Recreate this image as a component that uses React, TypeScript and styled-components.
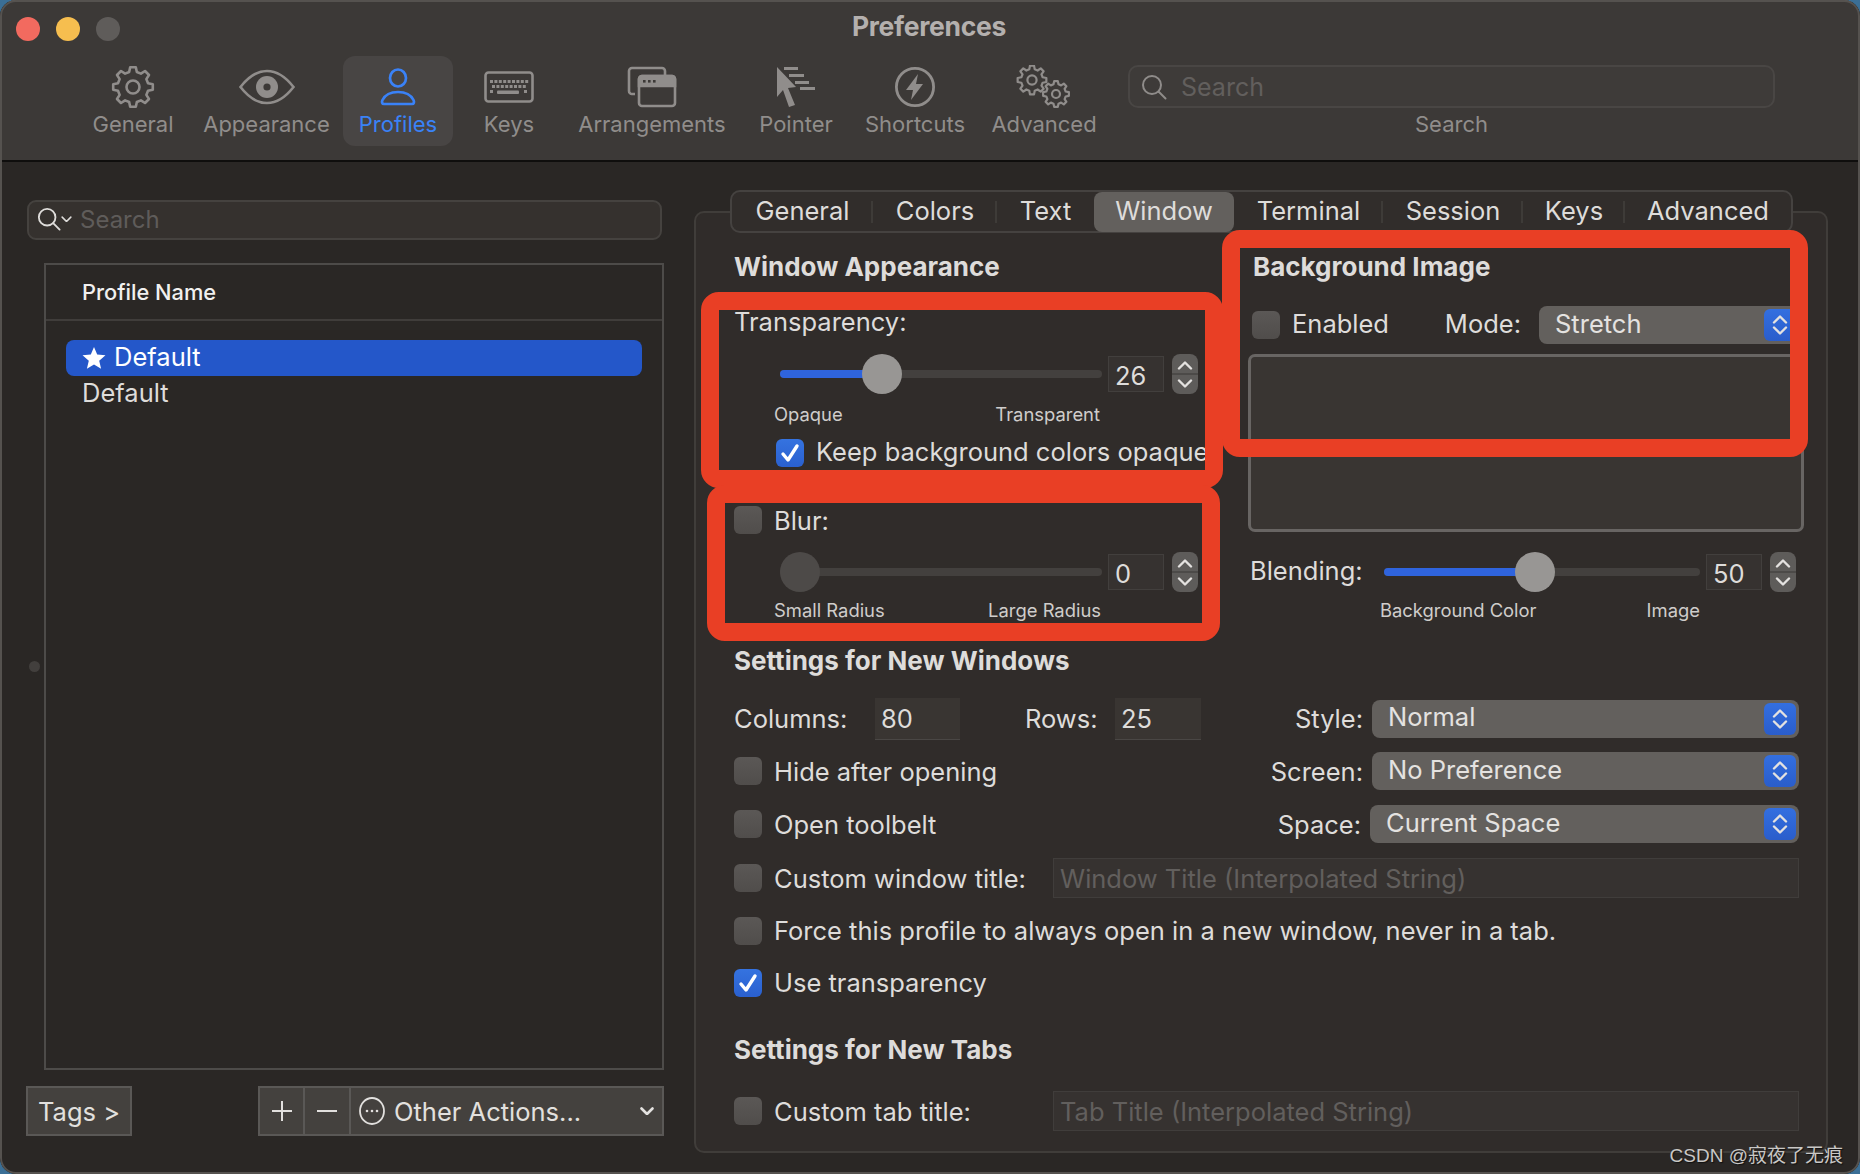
import React from 'react';
import styled, { createGlobalStyle } from 'styled-components';

const GlobalStyle = createGlobalStyle`
    html, body {
        margin: 0;
        padding: 0;
        background: #3b6f96;
    }
    * {
        box-sizing: border-box;
    }
    body {
        font-family: Inter, "Liberation Sans", sans-serif;
    }
`;

const Window = styled.div`
    position: relative;
    width: 1860px;
    height: 1174px;
    border-radius: 16px;
    overflow: hidden;
    display: flex;
    flex-direction: column;
    background: #2a2725;
    &::after {
        content: '';
        position: absolute;
        inset: 0;
        border-radius: 16px;
        border: 2px solid #55524f;
        pointer-events: none;
        z-index: 5;
    }
`;

const Header = styled.div`
    height: 162px;
    flex: none;
    background: #3c3937;
    border-top: 2px solid #6b6967;
    border-bottom: 2px solid #0f0e0d;
`;

const TitleBar = styled.div`
    height: 54px;
    padding-left: 16px;
    display: grid;
    grid-template-columns: 1fr auto 1fr;
    align-items: center;
`;

const Lights = styled.div`
    display: flex;
    gap: 16px;
`;

const Light = styled.div<{ $color: string }>`
    width: 24px;
    height: 24px;
    border-radius: 50%;
    background: ${(p) => p.$color};
`;

const Title = styled.div`
    font-size: 26.5px;
    font-weight: 700;
    letter-spacing: -0.3px;
    color: #b4b0ae;
    margin: 0 18px 6px 0;
`;

const ToolRow = styled.div`
    display: flex;
    padding-left: 76px;
    height: 90px;
`;

const ToolItem = styled.div<{ $w: number; $active?: boolean }>`
    width: ${(p) => p.$w}px;
    flex: none;
    height: 90px;
    padding-top: 9px;
    border-radius: 12px;
    display: flex;
    flex-direction: column;
    align-items: center;
    background: ${(p) => (p.$active ? '#484544' : 'transparent')};
    color: ${(p) => (p.$active ? '#3a82f7' : '#908d8b')};
`;

const ToolIcon = styled.div`
    height: 44px;
    display: flex;
    align-items: center;
    justify-content: center;
`;

const ToolLabel = styled.div`
    margin-top: 1px;
    font-size: 22px;
    line-height: 28px;
    white-space: nowrap;
`;

const ToolSearch = styled.div`
    width: 647px;
    margin-left: 17px;
    padding-top: 9px;
    display: flex;
    flex-direction: column;
    align-items: center;
    color: #908d8b;
`;

const ToolSearchBox = styled.div`
    width: 100%;
    height: 43px;
    border: 2px solid #494644;
    border-radius: 10px;
    background: #3e3b39;
    display: flex;
    align-items: center;
    padding-left: 11px;
    gap: 14px;
    font-size: 25px;
    color: #625f5d;
    margin-bottom: 1px;
`;

const Main = styled.div`
    flex: 1;
    display: flex;
`;

const LeftPane = styled.div`
    position: relative;
    width: 664px;
    flex: none;
    padding: 38px 0 0 26px;
    display: flex;
    flex-direction: column;
`;

const ProfileSearch = styled.div`
    margin-left: 1px;
    width: 635px;
    height: 40px;
    border: 2px solid #45423f;
    border-radius: 9px;
    background: #35312e;
    display: flex;
    align-items: center;
    padding: 0 0 2px 8px;
    gap: 8px;
    font-size: 24px;
    color: #5f5c5a;
`;

const SearchCaret = styled.span`
    margin-left: -8px;
    display: flex;
`;

const ProfileTable = styled.div`
    margin: 23px 0 0 18px;
    width: 620px;
    height: 807px;
    border: 2px solid #4d4b49;
`;

const TableHead = styled.div`
    height: 56px;
    padding-left: 36px;
    display: flex;
    align-items: center;
    border-bottom: 2px solid #403d3b;
    font-size: 21.8px;
    font-weight: 500;
    color: #f1f0ef;
`;

const TableBody = styled.div`
    padding: 19px 20px 0 20px;
`;

const ProfileRow = styled.div<{ $selected?: boolean }>`
    height: 36px;
    padding-left: 16px;
    display: flex;
    align-items: center;
    gap: 8px;
    border-radius: 8px;
    font-size: 25.5px;
    background: ${(p) => (p.$selected ? '#2457c9' : 'transparent')};
    color: ${(p) => (p.$selected ? '#ffffff' : '#dedcda')};
`;

const Lifted = styled.span`
    margin-bottom: 4px;
`;

const SplitDot = styled.div`
    position: absolute;
    left: 29px;
    top: 499px;
    width: 11px;
    height: 11px;
    border-radius: 50%;
    background: #423f3d;
`;

const Footer = styled.div`
    margin-top: 16px;
    display: flex;
    justify-content: space-between;
`;

const FooterBtn = styled.div<{ $w: number }>`
    width: ${(p) => p.$w}px;
    height: 50px;
    border: 2px solid #5a5856;
    background: #44413e;
    color: #e2e0de;
    font-size: 25.5px;
    display: flex;
    align-items: center;
    justify-content: center;
`;

const FooterGroup = styled.div`
    display: flex;
`;

const JoinBtn = styled(FooterBtn)`
    margin-left: -2px;
`;

const ActionsBtn = styled(FooterBtn)`
    margin-left: -2px;
    justify-content: flex-start;
    padding: 0 8px;
    gap: 9px;
`;

const ActionsChevron = styled.div`
    margin-left: auto;
    display: flex;
`;

const RightWrap = styled.div`
    position: relative;
    margin-left: 30px;
    width: 1134px;
    padding-top: 28px;
    display: flex;
    flex-direction: column;
`;

const TabBar = styled.div`
    position: relative;
    z-index: 1;
    margin-left: 36px;
    width: 1063px;
    height: 43px;
    border: 2px solid #454240;
    border-radius: 10px;
    background: #312d2b;
    display: flex;
    align-items: center;
`;

const Tab = styled.div<{ $w: number; $on?: boolean; $sep?: boolean }>`
    position: relative;
    width: ${(p) => p.$w}px;
    height: 40px;
    padding-bottom: 2px;
    border-radius: 8px;
    display: flex;
    align-items: center;
    justify-content: center;
    font-size: 25.5px;
    color: #dedcda;
    background: ${(p) => (p.$on ? '#63605d' : 'transparent')};
    &::after {
        content: '';
        display: ${(p) => (p.$sep ? 'block' : 'none')};
        position: absolute;
        right: 0;
        top: 9px;
        height: 22px;
        width: 2px;
        background: #3e3b38;
    }
`;

const Pane = styled.div`
    position: relative;
    margin-top: -22px;
    height: 942px;
    border: 2px solid #403d3a;
    border-radius: 10px;
    background: #302c2a;
    padding: 20px 0 0 38px;
    color: #dedcda;
    font-size: 25.5px;
`;

const TopGrid = styled.div`
    display: grid;
    grid-template-columns: 516px 549px;
`;

const Column = styled.div`
    display: flex;
    flex-direction: column;
`;

const Row = styled.div<{ $h: number; $indent?: number; $top?: number }>`
    height: ${(p) => p.$h}px;
    margin-top: ${(p) => p.$top || 0}px;
    padding-left: ${(p) => p.$indent || 0}px;
    display: flex;
    align-items: center;
    white-space: nowrap;
`;

const Heading = styled.div<{ $ml?: number }>`
    margin-left: ${(p) => p.$ml || 0}px;
    font-size: 26px;
    font-weight: 700;
    color: #dedcda;
`;

const Check = styled.div<{ $on?: boolean }>`
    width: 28px;
    height: 28px;
    flex: none;
    margin-right: 12px;
    border-radius: 6px;
    display: flex;
    align-items: center;
    justify-content: center;
    background: ${(p) => (p.$on ? 'linear-gradient(#3573e0, #2a60cf)' : 'linear-gradient(#5b5856, #504d4b)')};
`;

const SliderTrack = styled.div<{ $w: number }>`
    position: relative;
    width: ${(p) => p.$w}px;
    height: 8px;
    border-radius: 4px;
    background: #43403e;
    flex: none;
`;

const SliderFill = styled.div<{ $w: number }>`
    width: ${(p) => p.$w}px;
    height: 8px;
    border-radius: 4px;
    background: #2f64dd;
`;

const SliderThumb = styled.div<{ $x: number; $dim?: boolean }>`
    position: absolute;
    left: ${(p) => p.$x - 20}px;
    top: -16px;
    width: 40px;
    height: 40px;
    border-radius: 50%;
    background: ${(p) => (p.$dim ? '#4d4a48' : '#989694')};
`;

const NumberBox = styled.div`
    width: 56px;
    height: 36px;
    margin-left: 6px;
    padding: 2px 0 0 6px;
    flex: none;
    display: flex;
    align-items: center;
    background: #363230;
    border: 1px solid #423f3d;
`;

const StepperBox = styled.div`
    position: relative;
    width: 26px;
    height: 40px;
    margin-left: 8px;
    flex: none;
    border-radius: 8px;
    background: #5e5c5a;
    display: flex;
    align-items: center;
    justify-content: center;
    &::before {
        content: '';
        position: absolute;
        left: 0;
        right: 0;
        top: 19px;
        height: 2px;
        background: #4c4a48;
    }
`;

const SmallLabels = styled.div<{ $left: number; $w: number }>`
    margin-left: ${(p) => p.$left}px;
    width: ${(p) => p.$w}px;
    display: flex;
    justify-content: space-between;
    font-size: 18.4px;
    color: #cfcdcb;
`;

const ModeLabel = styled(Lifted)`
    margin-left: auto;
    margin-right: 18px;
`;

const Popup = styled.div<{ $w: number }>`
    width: ${(p) => p.$w}px;
    height: 38px;
    flex: none;
    border-radius: 8px;
    background: #63605d;
    display: flex;
    align-items: center;
    justify-content: space-between;
    padding: 0 3px 0 16px;
    color: #e4e2e0;
`;

const PopupArrows = styled.div`
    width: 32px;
    height: 32px;
    border-radius: 6px;
    background: linear-gradient(#336fe0, #2a5dcb);
    display: flex;
    align-items: center;
    justify-content: center;
`;

const ImageWell = styled.div`
    margin: 4px 0 0 -2px;
    width: 556px;
    height: 178px;
    border: 3px solid #686563;
    border-radius: 7px;
    background: #393532;
`;

const BlendLabel = styled(Lifted)`
    width: 134px;
    flex: none;
`;

const RowLeft = styled.div`
    display: flex;
    align-items: center;
`;

const RowRight = styled.div`
    margin-left: auto;
    margin-right: 27px;
    display: flex;
    align-items: center;
    gap: 9px;
`;

const FieldName = styled.span<{ $w: number; $ml?: number }>`
    width: ${(p) => p.$w}px;
    margin-left: ${(p) => p.$ml || 0}px;
    flex: none;
`;

const SmallField = styled.div<{ $w: number }>`
    width: ${(p) => p.$w}px;
    height: 42px;
    padding-left: 6px;
    display: flex;
    align-items: center;
    background: #393532;
    border-bottom: 1px solid #4a4745;
`;

const TextField = styled.div`
    width: 746px;
    height: 40px;
    padding-left: 6px;
    display: flex;
    align-items: center;
    background: #363230;
    border: 1px solid #403d3b;
    color: #625f5d;
`;

const RedRing = styled.div<{ $x: number; $y: number; $w: number; $h: number }>`
    position: absolute;
    left: ${(p) => p.$x - 696}px;
    top: ${(p) => p.$y - 213}px;
    width: ${(p) => p.$w}px;
    height: ${(p) => p.$h}px;
    border: 18px solid #e93f25;
    border-radius: 18px;
    z-index: 2;
`;

const Watermark = styled.div`
    position: absolute;
    right: 17px;
    bottom: 7px;
    z-index: 6;
    font-family: "Liberation Sans", "Noto Sans CJK SC", sans-serif;
    font-size: 19px;
    color: #c9c7c5;
    text-shadow: 1px 1px 1px #111;
`;

function gearPath(cx: number, cy: number, ro: number, ri: number, n: number) {
    const pts: string[] = [];
    const step = (Math.PI * 2) / n;
    for (let i = 0; i < n; i++) {
        const a = i * step - Math.PI / 2;
        const add = (r: number, t: number) => {
            const ang = a + t * step;
            pts.push(`${(cx + r * Math.cos(ang)).toFixed(2)} ${(cy + r * Math.sin(ang)).toFixed(2)}`);
        };
        add(ri, -0.32);
        add(ro, -0.18);
        add(ro, 0.18);
        add(ri, 0.32);
    }
    return 'M' + pts.join('L') + 'Z';
}

const GearIcon = () => (
    <svg width="44" height="44" viewBox="0 0 44 44" fill="none" stroke="currentColor" strokeWidth="2.6" strokeLinejoin="round">
        <path d={gearPath(22, 22, 20, 15.5, 8)} />
        <circle cx="22" cy="22" r="6.5" />
    </svg>
);

const EyeIcon = () => (
    <svg width="56" height="36" viewBox="0 0 56 36" fill="none">
        <path d="M1.5 18C10 7 19 2 28 2s18 5 26.500 16C46 29 37 34 28 34S10 29 1.500 18Z" stroke="currentColor" strokeWidth="2.6" />
        <circle cx="28" cy="18" r="11" fill="currentColor" />
        <circle cx="28" cy="18" r="3.6" fill="#3c3937" />
    </svg>
);

const PersonIcon = () => (
    <svg width="36" height="38" viewBox="0 0 36 38" fill="none" stroke="currentColor" strokeWidth="2.7">
        <ellipse cx="18" cy="10" rx="8" ry="8.500" />
        <path d="M4 36c-2 0-2.500-2-1.500-4 3-6 9-8 15.500-8s12.500 2 15.500 8c1 2 .5 4-1.500 4Z" strokeLinejoin="round" />
    </svg>
);

const KeyboardIcon = () => {
    const keys: React.ReactNode[] = [];
    [9, 14].forEach((y, r) => {
        for (let i = 0; i < 9 - r; i++) {
            keys.push(<rect key={`${r}-${i}`} x={6 + r * 2 + i * 4.4} y={y} width="3" height="3" />);
        }
    });
    return (
        <svg width="50" height="32" viewBox="0 0 50 32" fill="currentColor">
            <rect x="1.5" y="1.5" width="47" height="29" rx="3" fill="none" stroke="currentColor" strokeWidth="2.6" />
            {keys}
            <rect x="6" y="19" width="3" height="3" />
            <rect x="13" y="19.5" width="22" height="3.4" rx="1" />
            <rect x="40" y="19" width="3" height="3" />
        </svg>
    );
};

const ArrangeIcon = () => (
    <svg width="50" height="42" viewBox="0 0 50 42" fill="none" stroke="currentColor" strokeWidth="2.6">
        <path d="M8 28H5a3 3 0 0 1-3-3V5a3 3 0 0 1 3-3h30a3 3 0 0 1 3 3v4" />
        <rect x="12" y="10" width="36" height="30" rx="3" />
        <path d="M12 13a3 3 0 0 1 3-3h30a3 3 0 0 1 3 3v7H12Z" fill="currentColor" />
        <g fill="#3c3937" stroke="none">
            <rect x="16" y="14" width="2.6" height="2.6" />
            <rect x="21" y="14" width="2.6" height="2.6" />
            <rect x="26" y="14" width="2.6" height="2.6" />
        </g>
    </svg>
);

const PointerIcon = () => (
    <svg width="40" height="42" viewBox="0 0 40 42" fill="currentColor">
        <path d="M1 1 L20 21 L12 22 L19 39 L13 41 L7 24 L1 31 Z" />
        <rect x="8" y="1" width="14" height="3" />
        <rect x="13" y="8" width="15" height="3" />
        <rect x="19" y="15" width="14" height="3" />
        <rect x="24" y="21" width="15" height="3" />
    </svg>
);

const BoltIcon = () => (
    <svg width="42" height="42" viewBox="0 0 42 42" fill="none">
        <circle cx="21" cy="21" r="18.6" stroke="currentColor" strokeWidth="2.8" />
        <path d="M24 8 L12 24 H19 L17 34 L29 18 H22 Z" fill="currentColor" />
    </svg>
);

const GearsIcon = () => (
    <svg width="56" height="44" viewBox="0 0 56 44" fill="none" stroke="currentColor" strokeWidth="2.2" strokeLinejoin="round">
        <path d={gearPath(16, 15, 14.5, 11, 8)} />
        <circle cx="16" cy="15" r="4.6" />
        <path d={gearPath(40, 29, 13, 10, 8)} />
        <circle cx="40" cy="29" r="4" />
    </svg>
);

const GlassIcon = ({ size = 26, color = 'currentColor' }: { size?: number; color?: string }) => (
    <svg width={size} height={size} viewBox="0 0 26 26" fill="none" stroke={color} strokeWidth="2">
        <circle cx="11" cy="11" r="9" />
        <path d="M17.5 17.5 L24.5 24.5" strokeLinecap="round" />
    </svg>
);

const Chevron = ({ size = 14, color = '#e4e2e0', w = 2.6 }: { size?: number; color?: string; w?: number }) => (
    <svg width={size} height={size * 0.6} viewBox="0 0 14 8.4" fill="none" stroke={color} strokeWidth={w} strokeLinecap="round" strokeLinejoin="round">
        <path d="M1.5 1.5 L7 7 L12.5 1.5" />
    </svg>
);

const UpDown = ({ gap }: { gap: number }) => (
    <svg width="16" height={16 + gap} viewBox={`0 0 16 ${16 + gap}`} fill="none" stroke="#e4e2e0" strokeWidth="2.4" strokeLinecap="round" strokeLinejoin="round" style={{ position: 'relative' }}>
        <path d="M2 7.5 L8 1.5 L14 7.5" />
        <path d={`M2 ${8.5 + gap} L8 ${14.5 + gap} L14 ${8.5 + gap}`} />
    </svg>
);

const Tick = () => (
    <svg width="20" height="20" viewBox="0 0 20 20" fill="none" stroke="#fff" strokeWidth="3.4" strokeLinecap="round" strokeLinejoin="round">
        <path d="M3 11 L8 17 L17 3" />
    </svg>
);

const Star = () => (
    <svg width="24" height="24" viewBox="0 0 24 24" fill="#fff">
        <path d="M12 1l3.2 7.6 8.3.7-6.3 5.4 1.9 8.1L12 18.5 4.9 22.800l1.900-8.100L.5 9.300l8.300-.7Z" />
    </svg>
);

const DotsCircle = () => (
    <svg width="26" height="30" viewBox="0 0 26 30" fill="none">
        <ellipse cx="13" cy="15" rx="12" ry="13" stroke="#e2e0de" strokeWidth="1.8" />
        <g fill="#e2e0de">
            <circle cx="8" cy="15" r="1.300" />
            <circle cx="13" cy="15" r="1.300" />
            <circle cx="18" cy="15" r="1.300" />
        </g>
    </svg>
);

const Slider = ({ width, fill, thumb, dim }: { width: number; fill: number; thumb: number; dim?: boolean }) => (
    <SliderTrack $w={width}>
        <SliderFill $w={fill} />
        <SliderThumb $x={thumb} $dim={dim} />
    </SliderTrack>
);

const NumberStepper = ({ value }: { value: number }) => (
    <>
        <NumberBox>{value}</NumberBox>
        <StepperBox>
            <UpDown gap={11} />
        </StepperBox>
    </>
);

const PopupButton = ({ value, width }: { value: string; width: number }) => (
    <Popup $w={width}>
        <Lifted>{value}</Lifted>
        <PopupArrows>
            <UpDown gap={4} />
        </PopupArrows>
    </Popup>
);

const tools = [
    { label: 'General', w: 114, icon: <GearIcon /> },
    { label: 'Appearance', w: 153, icon: <EyeIcon /> },
    { label: 'Profiles', w: 110, icon: <PersonIcon />, active: true },
    { label: 'Keys', w: 112, icon: <KeyboardIcon /> },
    { label: 'Arrangements', w: 174, icon: <ArrangeIcon /> },
    { label: 'Pointer', w: 114, icon: <PointerIcon /> },
    { label: 'Shortcuts', w: 124, icon: <BoltIcon /> },
    { label: 'Advanced', w: 134, icon: <GearsIcon /> },
];

const tabs = [
    { label: 'General', w: 141, sep: true },
    { label: 'Colors', w: 124, sep: true },
    { label: 'Text', w: 97 },
    { label: 'Window', w: 140, on: true },
    { label: 'Terminal', w: 149, sep: true },
    { label: 'Session', w: 140, sep: true },
    { label: 'Keys', w: 102, sep: true },
    { label: 'Advanced', w: 166 },
];

export default function App() {
    return (
        <Window>
            <GlobalStyle />
            <Header>
                <TitleBar>
                    <Lights>
                        <Light $color="#f26a5f" />
                        <Light $color="#f6be4f" />
                        <Light $color="#5f5c5a" />
                    </Lights>
                    <Title>Preferences</Title>
                </TitleBar>
                <ToolRow>
                    {tools.map((t) => (
                        <ToolItem key={t.label} $w={t.w} $active={t.active}>
                            <ToolIcon>{t.icon}</ToolIcon>
                            <ToolLabel>{t.label}</ToolLabel>
                        </ToolItem>
                    ))}
                    <ToolSearch>
                        <ToolSearchBox>
                            <GlassIcon color="#8f8c8a" />
                            Search
                        </ToolSearchBox>
                        <ToolLabel>Search</ToolLabel>
                    </ToolSearch>
                </ToolRow>
            </Header>
            <Main>
                <LeftPane>
                    <ProfileSearch>
                        <GlassIcon size={24} color="#dedcda" />
                        <SearchCaret>
                            <Chevron size={11} w={2} color="#dedcda" />
                        </SearchCaret>
                        Search
                    </ProfileSearch>
                    <ProfileTable>
                        <TableHead>Profile Name</TableHead>
                        <TableBody>
                            <ProfileRow $selected>
                                <Star />
                                <Lifted>Default</Lifted>
                            </ProfileRow>
                            <ProfileRow>
                                <Lifted>Default</Lifted>
                            </ProfileRow>
                        </TableBody>
                    </ProfileTable>
                    <Footer>
                        <FooterBtn $w={106}>Tags &gt;</FooterBtn>
                        <FooterGroup>
                            <FooterBtn $w={47}>
                                <svg width="22" height="22" viewBox="0 0 22 22" stroke="#e2e0de" strokeWidth="2">
                                    <path d="M11 1V21M1 11H21" />
                                </svg>
                            </FooterBtn>
                            <JoinBtn $w={48}>
                                <svg width="22" height="4" viewBox="0 0 22 4" stroke="#e2e0de" strokeWidth="2">
                                    <path d="M1 2H21" />
                                </svg>
                            </JoinBtn>
                            <ActionsBtn $w={315}>
                                <DotsCircle />
                                Other Actions...
                                <ActionsChevron>
                                    <Chevron size={14} />
                                </ActionsChevron>
                            </ActionsBtn>
                        </FooterGroup>
                    </Footer>
                    <SplitDot />
                </LeftPane>
                <RightWrap>
                    <TabBar>
                        {tabs.map((t) => (
                            <Tab key={t.label} $w={t.w} $on={t.on} $sep={t.sep}>
                                {t.label}
                            </Tab>
                        ))}
                    </TabBar>
                    <Pane>
                        <TopGrid>
                            <Column>
                                <Row $h={67}>
                                    <Heading>Window Appearance</Heading>
                                </Row>
                                <Row $h={46}>
                                    <Lifted>Transparency:</Lifted>
                                </Row>
                                <Row $h={56} $indent={46}>
                                    <Slider width={322} fill={102} thumb={102} />
                                    <NumberStepper value={26} />
                                </Row>
                                <Row $h={24}>
                                    <SmallLabels $left={40} $w={326}>
                                        <span>Opaque</span>
                                        <span>Transparent</span>
                                    </SmallLabels>
                                </Row>
                                <Row $h={54} $indent={42}>
                                    <Check $on>
                                        <Tick />
                                    </Check>
                                    <Lifted>Keep background colors opaque</Lifted>
                                </Row>
                                <Row $h={60} $top={10}>
                                    <Check />
                                    Blur:
                                </Row>
                                <Row $h={44} $indent={46}>
                                    <Slider width={322} fill={0} thumb={20} dim />
                                    <NumberStepper value={0} />
                                </Row>
                                <Row $h={32}>
                                    <SmallLabels $left={40} $w={327}>
                                        <span>Small Radius</span>
                                        <span>Large Radius</span>
                                    </SmallLabels>
                                </Row>
                            </Column>
                            <Column>
                                <Row $h={67}>
                                    <Heading $ml={3}>Background Image</Heading>
                                </Row>
                                <Row $h={50} $indent={2}>
                                    <Check />
                                    <Lifted>Enabled</Lifted>
                                    <ModeLabel>Mode:</ModeLabel>
                                    <PopupButton value="Stretch" width={260} />
                                </Row>
                                <ImageWell />
                                <Row $h={40} $top={20}>
                                    <BlendLabel>Blending:</BlendLabel>
                                    <Slider width={316} fill={151} thumb={151} />
                                    <NumberStepper value={50} />
                                </Row>
                                <Row $h={36}>
                                    <SmallLabels $left={130} $w={320}>
                                        <span>Background Color</span>
                                        <span>Image</span>
                                    </SmallLabels>
                                </Row>
                            </Column>
                        </TopGrid>
                        <Row $h={64}>
                            <Heading>Settings for New Windows</Heading>
                        </Row>
                        <Row $h={53}>
                            <RowLeft>
                                <FieldName $w={141}>Columns:</FieldName>
                                <SmallField $w={85}>80</SmallField>
                                <FieldName $w={90} $ml={65}>Rows:</FieldName>
                                <SmallField $w={86}>25</SmallField>
                            </RowLeft>
                            <RowRight>
                                Style:
                                <PopupButton value="Normal" width={427} />
                            </RowRight>
                        </Row>
                        <Row $h={52}>
                            <RowLeft>
                                <Check />
                                Hide after opening
                            </RowLeft>
                            <RowRight>
                                Screen:
                                <PopupButton value="No Preference" width={427} />
                            </RowRight>
                        </Row>
                        <Row $h={54}>
                            <RowLeft>
                                <Check />
                                Open toolbelt
                            </RowLeft>
                            <RowRight>
                                Space:
                                <PopupButton value="Current Space" width={429} />
                            </RowRight>
                        </Row>
                        <Row $h={54}>
                            <Check />
                            <FieldName $w={279}>Custom window title:</FieldName>
                            <TextField>Window Title (Interpolated String)</TextField>
                        </Row>
                        <Row $h={51}>
                            <Check />
                            Force this profile to always open in a new window, never in a tab.
                        </Row>
                        <Row $h={53}>
                            <Check $on>
                                <Tick />
                            </Check>
                            Use transparency
                        </Row>
                        <Row $h={80}>
                            <Heading>Settings for New Tabs</Heading>
                        </Row>
                        <Row $h={44}>
                            <Check />
                            <FieldName $w={279}>Custom tab title:</FieldName>
                            <TextField>Tab Title (Interpolated String)</TextField>
                        </Row>
                        <RedRing $x={701} $y={292} $w={522} $h={196} />
                        <RedRing $x={707} $y={485} $w={513} $h={156} />
                        <RedRing $x={1222} $y={230} $w={586} $h={227} />
                    </Pane>
                </RightWrap>
            </Main>
            <Watermark>CSDN @寂夜了无痕</Watermark>
        </Window>
    );
}
